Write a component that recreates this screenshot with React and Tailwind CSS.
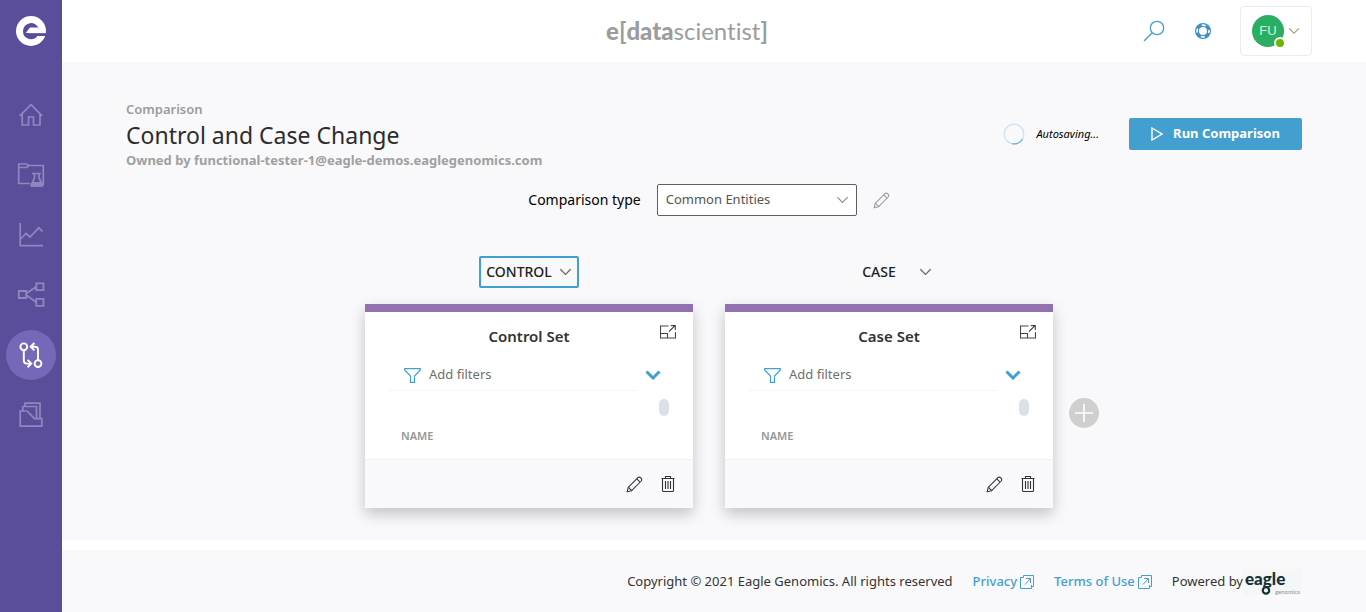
import React from "react";

const stroke = { fill: "none", stroke: "currentColor" };

function Chevron({ className, width = 1 }) {
  return (
    <svg aria-hidden="true" viewBox="0 0 16 10" className={className} {...stroke} strokeWidth={width}>
      <path d="M1.5 1.5 L8 8 L14.5 1.5" />
    </svg>
  );
}

function Pencil({ className }) {
  return (
    <svg aria-hidden="true" viewBox="0 0 18 18" className={className} {...stroke} strokeWidth="1.1" strokeLinejoin="round">
      <path d="M1.2 16.8 L2.4 12 L12.6 1.8 Q14.2 0.4 15.8 2 Q17.4 3.7 16.1 5.3 L6 15.5 Z" />
      <path d="M11.4 3 L14.9 6.5 M2.4 12 Q3.2 11.9 3.5 13.1 L4.9 14.4 Q6 14.8 6 15.5" />
    </svg>
  );
}

function Trash({ className }) {
  return (
    <svg aria-hidden="true" viewBox="0 0 16 18" className={className} {...stroke} strokeWidth="1.1">
      <path d="M1.5 3.5 H14.5 M5.5 3.5 V1.5 H10.5 V3.5 M2.5 3.5 V15.5 Q2.5 16.5 3.5 16.5 H12.5 Q13.5 16.5 13.5 15.5 V3.5 M5.5 6 V14 M8 6 V14 M10.5 6 V14" />
    </svg>
  );
}

function Expand() {
  return (
    <svg aria-hidden="true" viewBox="0 0 16 14" className="h-3.5 w-4" {...stroke} strokeWidth="1.1">
      <path d="M8.5 1 H0.5 V13 H15.5 V7 M0.5 8.5 H7.5 V13 M9 6.5 L14.6 1.2 M10.8 0.6 H15.3 V5" />
    </svg>
  );
}

function Funnel() {
  return (
    <svg aria-hidden="true" viewBox="0 0 17 15" className="h-[15px] w-[17px] text-[#439fd0]" {...stroke} strokeWidth="1.2">
      <path d="M0.7 0.7 H16.3 V2 L10.5 8 V14.3 H6.5 V8 L0.7 2 Z" />
    </svg>
  );
}

function External() {
  return (
    <svg aria-hidden="true" viewBox="0 0 14 14" className="size-3.5" {...stroke} strokeWidth="1">
      <path d="M3.5 2.5 V0.5 H13.5 V11.5 H11.5 M3.5 2.5 H0.5 V13.5 H11.5 V10 M5 9.5 L10 4 M6 3.5 H10.5 V8" />
    </svg>
  );
}

function HomeIcon() {
  return (
    <svg aria-hidden="true" viewBox="0 0 24 24" className="size-6" {...stroke} strokeWidth="1.7">
      <path d="M0.8 12.8 L12 1.6 L23.2 12.8 M3.2 11 V22 H9.5 V14 H14.5 V22 H21 V11" />
    </svg>
  );
}

function LabIcon() {
  return (
    <svg aria-hidden="true" viewBox="0 0 28 26" className="h-[26px] w-7" {...stroke} strokeWidth="1.7">
      <path d="M13 21.5 H1.7 V2 H9.5 L12 3.5 H26.3 V23 M1.7 5.5 H9.5 L12 3.5" />
      <path d="M15 11.5 H24 M17.5 11.5 V16 L14.2 22.8 Q14 24 15 24 H25 Q26 24 25.6 22.8 L22 16 V11.5" />
      <path d="M15.8 20 H24 L26 24.4 H13.8 Z" fill="currentColor" stroke="none" />
    </svg>
  );
}

function ChartIcon() {
  return (
    <svg aria-hidden="true" viewBox="0 0 24 24" className="size-6" {...stroke} strokeWidth="1.7">
      <path d="M1.2 0 V22.7 H24 M1.2 16.5 L7 10.5 L11 14 L19.8 4.8 L23.5 8.5" />
    </svg>
  );
}

function NetworkIcon() {
  return (
    <svg aria-hidden="true" viewBox="0 0 28 26" className="h-[26px] w-7" {...stroke} strokeWidth="1.8">
      <path d="M1.8 9 H9.2 V16 H1.8 Z M19.3 1.4 H26.5 V8.2 H19.3 Z M19.3 16.8 H26.5 V23.8 H19.3 Z M9.2 11.5 L19.3 4.8 M9.2 13 L19.3 20.2" />
    </svg>
  );
}

function CompareIcon() {
  return (
    <svg aria-hidden="true" viewBox="0 0 24 26" className="h-[26px] w-6" {...stroke} strokeWidth="1.9">
      <circle cx="4.8" cy="4.8" r="3.4" />
      <circle cx="19" cy="21.6" r="3.4" />
      <path d="M4.8 8.2 V18.6 Q4.8 21.6 7.8 21.6 H11.5 M8.6 17.8 L12.3 21.6 L8.6 25.2 M19 18.2 V8 Q19 4.8 16 4.8 H12.3 M15.4 1 L11.6 4.8 L15.4 8.4" />
    </svg>
  );
}

function FilesIcon() {
  return (
    <svg aria-hidden="true" viewBox="0 0 24 26" className="h-[26px] w-6" {...stroke} strokeWidth="1.7">
      <path d="M1.2 9 H8 L15.5 16.7 H22.8 V24.2 H1.2 Z M3.8 9 V4.5 H17.5 V16.7 M6 4.5 V1.2 H21 V16.7" />
    </svg>
  );
}

const navItems = [
  { label: "Home", Icon: HomeIcon },
  { label: "Projects", Icon: LabIcon },
  { label: "Analytics", Icon: ChartIcon },
  { label: "Network", Icon: NetworkIcon },
  { label: "Comparisons", Icon: CompareIcon, active: true },
  { label: "Files", Icon: FilesIcon },
];

function Sidebar() {
  return (
    <aside className="flex w-[62px] shrink-0 flex-col items-center bg-[#5a4e9a] pt-4">
      <a href="#home" aria-label="Eagle Genomics">
        <svg viewBox="0 0 30 30" className="size-[30px]">
          <circle cx="15" cy="15" r="15" fill="#fff" />
          <path d="M7 15 A8 8 0 0 1 22.6 12.6 L12 17.8 H30 V20 H21.4 A8 8 0 0 1 7 15 Z" fill="#5a4e9a" />
          <path d="M9.8 17 L14 11.4 H22 L23 17.2 Z" fill="#fff" />
          <path d="M9 17.2 H30 V19.2 H9 Z" fill="#5a4e9a" />
        </svg>
      </a>
      <nav aria-label="Main" className="mt-11 flex flex-col gap-2.5">
        {navItems.map(({ label, Icon, active }) => (
          <a
            key={label}
            href={"#" + label.toLowerCase()}
            aria-label={label}
            className={
              active
                ? "flex size-[50px] items-center justify-center rounded-full bg-[#7568b8] text-white"
                : "flex size-[50px] items-center justify-center rounded-full text-[#9087c0]"
            }
          >
            <Icon />
          </a>
        ))}
      </nav>
    </aside>
  );
}

function Header() {
  return (
    <header className="grid h-[62px] grid-cols-[1fr_auto_1fr] items-center bg-white pr-[54px]">
      <div />
      <a href="#home" className="font-['Lato',sans-serif] text-2xl text-[#9a9c9e] [font-variant-ligatures:none]">
        <span className="font-black">e</span>
        <span className="font-bold">[</span>
        <span className="font-black">data</span>
        <span>scientist</span>
        <span className="font-bold">]</span>
      </a>
      <div className="flex items-center justify-end">
        <button type="button" aria-label="Search" className="text-[#439fd0]">
          <svg viewBox="0 0 22 22" className="size-[22px]" {...stroke} strokeWidth="1.3">
            <circle cx="14" cy="8" r="6.7" />
            <path d="M9.2 12.8 L1 21" />
          </svg>
        </button>
        <button type="button" aria-label="Help" className="ml-[30px] text-[#3f8fc4]">
          <svg viewBox="0 0 16 16" className="size-4" {...stroke}>
            <circle cx="8" cy="8" r="6" strokeWidth="4" stroke="currentColor" />
            <circle cx="8" cy="8" r="5.9" strokeWidth="1.6" stroke="#fff" strokeDasharray="4 5.27" strokeDashoffset="2" />
          </svg>
        </button>
        <button type="button" aria-label="Account" className="ml-[29px] flex h-[50px] w-[72px] items-center rounded-sm border border-[#ebebeb] pl-[11px]">
          <span className="relative flex size-8 items-center justify-center rounded-full bg-[#29ae62] font-['Liberation_Sans',sans-serif] text-[13px] text-[#d9f2e3]">
            FU
            <span className="absolute -right-0.5 -bottom-0.5 size-3 rounded-full border-2 border-white bg-[#6bb700]" />
          </span>
          <Chevron width={1.4} className="ml-1 h-2 w-3 text-[#b08a62]" />
        </button>
      </div>
    </header>
  );
}

function SetColumn({ role, title, focused }) {
  return (
    <section className="flex w-[328px] flex-col items-center">
      <div className="grid w-[100px] items-center text-[#202020]">
        <select
          aria-label={title + " role"}
          defaultValue={role}
          className={
            focused
              ? "col-start-1 row-start-1 h-8 w-full appearance-none rounded-xs border-2 border-[#439fd0] bg-transparent pr-5 text-center text-sm font-medium [text-align-last:center] outline-none"
              : "col-start-1 row-start-1 h-8 w-full appearance-none rounded-xs border-2 border-transparent bg-transparent pr-5 text-center text-sm font-medium [text-align-last:center] outline-none"
          }
        >
          <option>CONTROL</option>
          <option>CASE</option>
        </select>
        <Chevron width={1.6} className="pointer-events-none col-start-1 row-start-1 mr-[7px] h-2 w-[13px] justify-self-end text-[#666]" />
      </div>
      <article className="mt-4 w-full border-t-8 border-[#9271ae] bg-white shadow-[0_6px_14px_rgba(0,0,0,0.22)]">
        <header className="grid h-12 grid-cols-[1fr_auto_1fr] items-center px-[17px]">
          <h2 className="col-start-2 text-[15px] font-semibold text-[#333]">{title}</h2>
          <button type="button" aria-label={"Expand " + title} className="mb-2 justify-self-end text-[#444]">
            <Expand />
          </button>
        </header>
        <button type="button" className="flex h-[31px] w-full items-center px-6 text-left">
          <span className="flex h-full w-[248px] items-center gap-2 border-b border-[#f5f5f6] pl-[15px] text-[13px] text-[#6f6f6f]">
            <Funnel />
            Add filters
          </span>
          <Chevron width={3} className="mb-0.5 ml-2 h-2.5 w-4 text-[#439fd0]" />
        </button>
        <div className="flex h-[68px] items-start px-6">
          <table className="w-[270px]">
            <thead>
              <tr className="h-[68px] border-b border-[#efeff0]">
                <th className="pt-[22px] pl-3 text-left text-[11px] font-semibold text-[#979797]">NAME</th>
              </tr>
            </thead>
          </table>
          <div className="mt-2 h-[17px] w-2.5 rounded-full bg-[#dce0e7]" />
        </div>
        <footer className="flex h-[49px] items-center justify-end gap-[17px] border-t border-[#efeff0] bg-[#f9f9fb] pr-[17px] text-[#333]">
          <button type="button" aria-label={"Edit " + title}>
            <Pencil className="size-[17px]" />
          </button>
          <button type="button" aria-label={"Delete " + title}>
            <Trash className="h-[18px] w-4" />
          </button>
        </footer>
      </article>
    </section>
  );
}

function ComparisonPage() {
  return (
    <main className="grow bg-[#f9f9fb] pt-[37px] pb-8">
      <div className="flex items-center justify-between px-16">
        <div>
          <p className="text-[13px] leading-5 font-semibold text-[#9b9b9b]">Comparison</p>
          <h1 className="text-[23px] leading-8 text-[#2c2c2c]">Control and Case Change</h1>
          <p className="text-[13px] leading-[18px] font-bold text-[#a0a0a0]">
            Owned by functional-tester-1@eagle-demos.eaglegenomics.com
          </p>
        </div>
        <div className="flex items-center">
          <svg aria-hidden="true" viewBox="0 0 22 22" className="size-[22px]" {...stroke} strokeWidth="1.3">
            <circle cx="11" cy="11" r="9.8" className="text-[#c9e3f1]" />
            <path d="M19.5 16 A9.8 9.8 0 0 1 9 20.6" className="text-[#6bb3da]" />
          </svg>
          <span role="status" className="ml-[11px] text-[11px] text-black italic">Autosaving...</span>
          <button type="button" className="ml-[30px] flex h-8 w-[173px] items-center justify-center gap-2.5 rounded-xs bg-[#439fd0] text-[13px] font-bold text-white">
            <svg aria-hidden="true" viewBox="0 0 12 14" className="h-3.5 w-3" {...stroke} strokeWidth="1.4">
              <path d="M1 1 L11 7 L1 13 Z" />
            </svg>
            Run Comparison
          </button>
        </div>
      </div>

      <div className="mt-[15px] pr-2.5">
        <div className="flex items-center justify-center gap-4">
          <label htmlFor="comparison-type" className="text-sm text-black">Comparison type</label>
          <div className="grid w-[200px] items-center">
            <select
              id="comparison-type"
              className="col-start-1 row-start-1 h-8 w-full appearance-none rounded-xs border border-[#5f5f63] bg-white px-2 text-[13px] text-[#555]"
            >
              <option>Common Entities</option>
            </select>
            <Chevron width={1.3} className="pointer-events-none col-start-1 row-start-1 mr-2 h-2 w-[13px] justify-self-end text-[#888]" />
          </div>
          <button type="button" aria-label="Edit comparison type" className="text-[#999]">
            <Pencil className="size-[17px]" />
          </button>
        </div>

        <div className="mt-10 grid grid-cols-[1fr_auto_1fr] items-center">
          <div className="col-start-2 flex gap-8">
            <SetColumn role="CONTROL" title="Control Set" focused />
            <SetColumn role="CASE" title="Case Set" />
          </div>
          <button type="button" aria-label="Add set" className="mt-[62px] ml-4 size-[30px] rounded-full bg-[#cfcfcf] text-white">
            <svg viewBox="0 0 30 30" className="size-[30px]" {...stroke} strokeWidth="1.6">
              <path d="M15 6 V24 M6 15 H24" />
            </svg>
          </button>
        </div>
      </div>
    </main>
  );
}

function Footer() {
  return (
    <footer className="mt-2.5 flex h-[62px] items-center justify-end gap-5 bg-[#f9f9fb] pt-0.5 pr-16 text-[13px] text-[#333]">
      <span>Copyright © 2021 Eagle Genomics. All rights reserved</span>
      <a href="#privacy" className="flex items-center gap-[3px] font-medium text-[#439fd0]">
        Privacy <External />
      </a>
      <a href="#terms" className="flex items-center gap-[3px] font-medium text-[#439fd0]">
        Terms of Use <External />
      </a>
      <span className="flex items-center">
        Powered by
        <svg role="img" aria-label="eagle genomics" viewBox="0 0 59 28" className="h-7 w-[59px]">
          <rect y="1" width="59" height="26" fill="#f5f6f6" />
          <text x="2" y="17" fontFamily="Lato, sans-serif" fontWeight="900" fontSize="17" fill="#14303a">eagle</text>
          <circle cx="23" cy="22.4" r="3.2" fill="none" stroke="#14303a" strokeWidth="2.2" />
          <text x="32" y="26" fontFamily="Lato, sans-serif" fontSize="6" fill="#8b9296">genomics</text>
        </svg>
      </span>
    </footer>
  );
}

export default function App() {
  return (
    <div className="flex min-h-screen bg-white font-['Noto_Sans',sans-serif]">
      <Sidebar />
      <div className="flex min-w-0 grow flex-col">
        <Header />
        <ComparisonPage />
        <Footer />
      </div>
    </div>
  );
}
